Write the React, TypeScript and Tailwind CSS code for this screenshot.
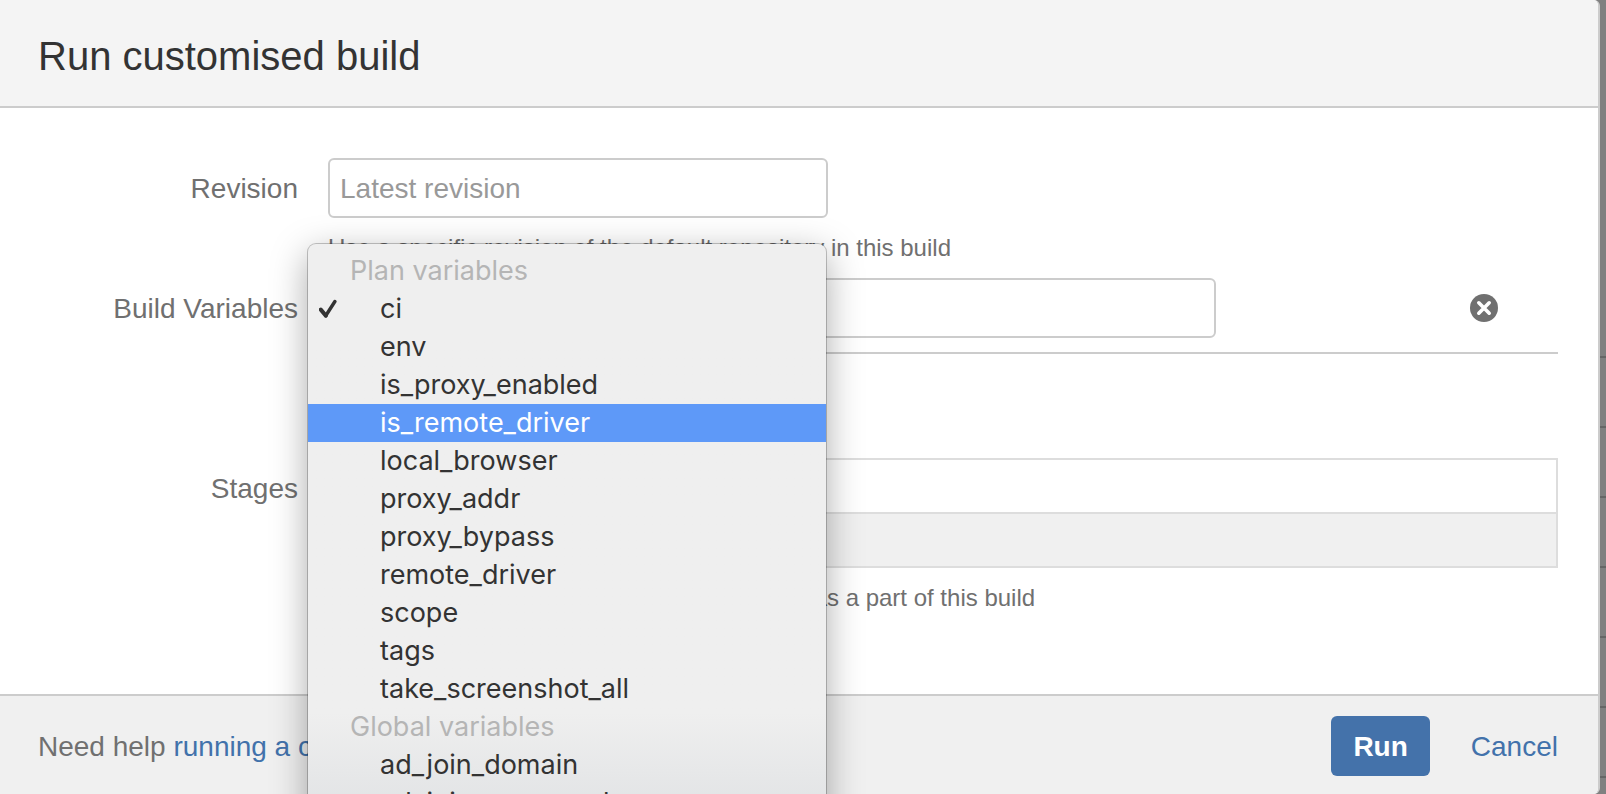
import React from "react";

const planVariables = [
  "ci",
  "env",
  "is_proxy_enabled",
  "is_remote_driver",
  "local_browser",
  "proxy_addr",
  "proxy_bypass",
  "remote_driver",
  "scope",
  "tags",
  "take_screenshot_all",
];
const globalVariables = ["ad_join_domain", "ad_join_password"];

function Option({ name, selected, active }: { name: string; selected?: boolean; active?: boolean }) {
  return (
    <li
      role="option"
      aria-selected={!!selected}
      className={
        "flex h-[38px] items-center pl-[11px] " + (active ? "bg-[#5e99f8] text-white" : "text-[#333]")
      }
    >
      <span className="flex w-[61px] shrink-0">
        {selected && (
          <svg width="18" height="20" viewBox="0 0 18 20" fill="none" aria-hidden="true">
            <path d="M1.8 10.6 L6.8 16.6" stroke="#333" strokeWidth="4" strokeLinecap="round" />
            <path d="M6.8 16.6 L15.8 2.6" stroke="#333" strokeWidth="3.6" strokeLinecap="round" />
          </svg>
        )}
      </span>
      {name}
    </li>
  );
}

function VariableMenu() {
  return (
    <ul
      role="listbox"
      aria-label="Variable"
      className="absolute -top-[34px] -left-5 z-10 w-[518px] rounded-lg bg-[#efefef] bg-linear-to-b from-[#efefef] from-80% to-[#dfe1e3] py-2 font-['Inter',sans-serif] text-[27px] shadow-[0_0_0_1px_rgba(0,0,0,0.22),0_10px_36px_rgba(0,0,0,0.34)]"
    >
      <li className="h-[38px] pl-[42px] leading-[38px] text-[#b5b5b5]">Plan variables</li>
      {planVariables.map((name) => (
        <Option key={name} name={name} selected={name === "ci"} active={name === "is_remote_driver"} />
      ))}
      <li className="h-[38px] pl-[42px] leading-[38px] text-[#b5b5b5]">Global variables</li>
      {globalVariables.map((name) => (
        <Option key={name} name={name} />
      ))}
    </ul>
  );
}

export default function App() {
  return (
    <div className="flex min-h-screen overflow-hidden bg-[#808080] font-['Liberation_Sans',Arial,sans-serif] text-[28px] text-[#707070]">
      <section
        role="dialog"
        aria-labelledby="dialog-title"
        className="flex min-w-0 flex-1 flex-col overflow-hidden rounded-r-md border-r-2 border-[#ccc] bg-white"
      >
        <header className="border-b-2 border-[#ccc] bg-[#f4f4f4] px-[38px] pt-[31px] pb-[25px]">
          <h1 id="dialog-title" className="text-[40px] leading-[50px] text-[#333]">
            Run customised build
          </h1>
        </header>

        <form className="grid flex-1 grid-cols-[298px_1fr] content-start gap-x-[30px] pt-[50px] pr-10">
          <label htmlFor="revision" className="text-right leading-[62px]">
            Revision
          </label>
          <div className="mb-[15px]">
            <input
              id="revision"
              type="text"
              placeholder="Latest revision"
              className="block h-[60px] w-[500px] rounded-md border-2 border-[#ccc] bg-white px-2.5 pt-0.5 placeholder:text-[#999]"
            />
            <p className="mt-[15px] text-2xl leading-[30px]">
              Use a specific revision of the default repository in this build
            </p>
          </div>

          <label htmlFor="variable" className="text-right leading-[62px]">
            Build Variables
          </label>
          <div className="relative mb-[104px] flex items-center border-b-2 border-[#ccc] pb-3.5">
            <select
              id="variable"
              defaultValue="ci"
              className="h-[60px] w-[370px] rounded-md border-2 border-[#ccc] bg-white px-2.5"
            >
              <option>ci</option>
            </select>
            <input
              type="text"
              aria-label="Variable value"
              className="ml-[18px] h-[60px] w-[500px] rounded-md border-2 border-[#ccc] bg-white px-2.5"
            />
            <button type="button" aria-label="Remove variable" className="mr-[60px] ml-auto">
              <svg width="28" height="28" viewBox="0 0 28 28" className="block" aria-hidden="true">
                <circle cx="14" cy="14" r="14" fill="#707070" />
                <path d="M8.8 8.8 L19.2 19.2 M19.2 8.8 L8.8 19.2" stroke="#fff" strokeWidth="3.6" strokeLinecap="round" />
              </svg>
            </button>
            <VariableMenu />
          </div>

          <span id="stages-label" className="text-right leading-[62px]">
            Stages
          </span>
          <div>
            <table
              aria-labelledby="stages-label"
              className="w-full border-collapse border-2 border-[#ddd]"
            >
              <tbody>
                <tr className="h-[54px] border-b-2 border-[#ddd]">
                  <td />
                </tr>
                <tr className="h-[54px] bg-[#f0f0f0]">
                  <td />
                </tr>
              </tbody>
            </table>
            <p className="mt-[15px] text-2xl leading-[30px]">
              Select which stages you want to be executed as a part of this build
            </p>
          </div>
        </form>

        <footer className="flex items-center border-t-2 border-[#ccc] bg-[#f0f0f0] pt-5 pr-10 pb-[18px] pl-[38px]">
          <p className="pt-0.5 whitespace-nowrap">
            Need help{" "}
            <a href="#help" className="text-[#4272ab]">
              running a customised build
            </a>
            ?
          </p>
          <button
            type="submit"
            className="ml-auto h-[60px] rounded-md bg-[#4472aa] px-[22px] pt-0.5 font-bold text-white"
          >
            Run
          </button>
          <a href="#cancel" className="ml-[41px] pt-0.5 text-[#4272ab]">
            Cancel
          </a>
        </footer>
      </section>

      <div aria-hidden="true" className="w-1.5 shrink-0 pt-[356px]">
        <div className="h-[70px] border-t-2 border-[#666]" />
        <div className="h-[70px] border-t-2 border-[#666]" />
        <div className="h-[70px] border-t-2 border-[#666]" />
        <div className="h-[70px] border-t-2 border-[#666]" />
        <div className="h-[70px] border-t-2 border-[#666]" />
        <div className="h-[70px] border-t-2 border-[#666]" />
        <div className="h-[18px] border-t-2 border-[#666]" />
      </div>
    </div>
  );
}
